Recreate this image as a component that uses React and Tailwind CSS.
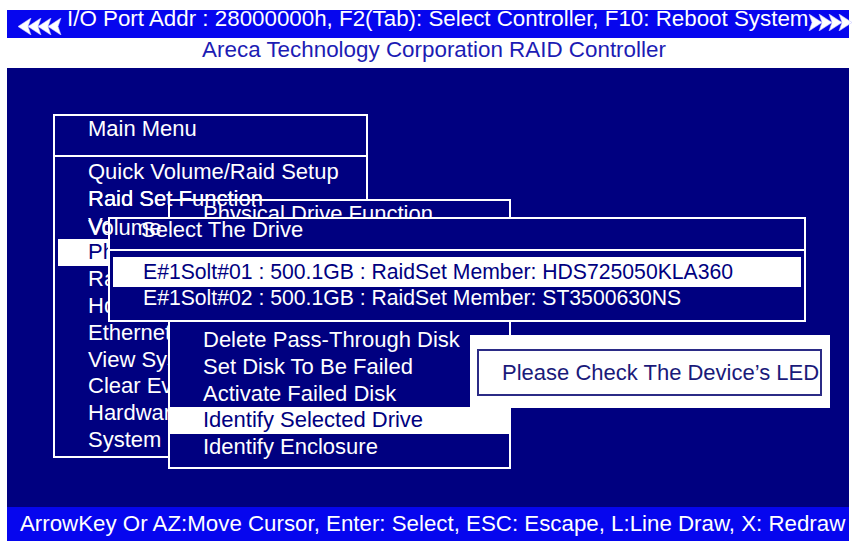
import React from 'react';

// Areca RAID BIOS screen: Physical Drives > Identify Selected Drive

const mainMenu = [
  'Quick Volume/Raid Setup',
  'Raid Set Function',
  'Volume Set Function',
  'Physical Drives',
  'Raid System Function',
  'Hdd Power Management',
  'Ethernet Configuration',
  'View System Events',
  'Clear Event Buffer',
  'Hardware Monitor',
  'System information',
];

// rows above these sit under the "Select The Drive" window
const driveMenu = [
  'Delete Pass-Through Disk',
  'Set Disk To Be Failed',
  'Activate Failed Disk',
  'Identify Selected Drive',
  'Identify Enclosure',
];

const drives = [
  'E#1Solt#01 : 500.1GB : RaidSet Member: HDS725050KLA360',
  'E#1Solt#02 : 500.1GB : RaidSet Member: ST3500630NS',
];

const Arrows = ({ flip }) => (
  <svg width="44" height="17" viewBox="0 0 44 17" className={flip ? 'shrink-0 -scale-x-100' : 'shrink-0'}>
    {[0, 1, 2, 3].map(i => (
      <polygon
        key={i}
        points={`${i * 10},8.5 ${i * 10 + 13},0 ${i * 10 + 10},8.5 ${i * 10 + 13},17`}
        fill="#ffffff"
        stroke="#c8c8ff"
        strokeWidth="0.6"
      />
    ))}
  </svg>
);

const MainMenu = () => (
  <div className="absolute left-[46px] top-[46px] w-[315px] h-[344px] border-2 border-white bg-[#000080]">
    <div className="h-[41px] border-b-2 border-white pl-[33px] leading-[26.8px]">Main Menu</div>
    <div className="pt-[2px]">
      {mainMenu.map((t, i) => (
        <div
          key={t}
          className={`mx-[3px] pl-[30px] leading-[26.8px] whitespace-nowrap overflow-hidden ${i === 3 ? 'bg-white text-[#000080]' : ''}`}
        >
          {t}
        </div>
      ))}
    </div>
  </div>
);

const DriveFunction = () => (
  <div className="absolute left-[161px] top-[131px] w-[343px] h-[270px] border-2 border-white bg-[#000080]">
    <div className="h-[36px] border-b-2 border-white pl-[33px] leading-[26.8px]">Physical Drive Function</div>
    <div className="pt-[90px]">
      {driveMenu.map((t, i) => (
        <div
          key={t}
          className={`pl-[33px] leading-[26.8px] whitespace-nowrap ${i === 3 ? 'bg-white text-[#000080]' : ''}`}
        >
          {t}
        </div>
      ))}
    </div>
  </div>
);

const SelectDrive = () => (
  <div className="absolute left-[101px] top-[149px] w-[698px] h-[105px] border-2 border-white bg-[#000080]">
    <div className="h-[32px] border-b-2 border-white pl-[31px] leading-[22px]">Select The Drive</div>
    <div className="pt-[6px] text-[21.2px]">
      <div className="mx-[3px] pl-[30px] leading-[30px] bg-white text-[#000080] whitespace-nowrap">{drives[0]}</div>
      <div className="mx-[3px] pl-[30px] leading-[22px] whitespace-nowrap">{drives[1]}</div>
    </div>
  </div>
);

const LedMessage = () => (
  <div className="absolute left-[463px] top-[267px] w-[360px] h-[73px] bg-white pl-[7px] pt-[14px]">
    <div className="w-[345px] h-[47px] border-2 border-[#2b2b86] flex items-center pl-[23px] text-[#1a1a7a] whitespace-nowrap">
      Please Check The Device’s LED
    </div>
  </div>
);

export default function App() {
  return (
    <div className="w-[856px] h-[543px] bg-white pt-[10px] px-[7px] font-['Liberation_Sans',Arial,sans-serif] text-[22px] text-white overflow-hidden">
      {/* top key bar */}
      <div className="h-[28px] bg-[#0606ee] flex items-start whitespace-nowrap leading-[17px] text-[22.35px]">
        <div className="ml-[11px] mt-[8px]"><Arrows /></div>
        <span className="ml-[5px]">I/O Port Addr : 28000000h, F2(Tab): Select Controller, F10: Reboot System</span>
        <div className="mt-[4px]"><Arrows flip /></div>
      </div>

      <div className="h-[30px] pt-[1px] pl-[12px] text-center leading-[22px] text-[22.4px] text-[#1c1cb4] whitespace-nowrap">
        Areca Technology Corporation RAID Controller
      </div>

      {/* screen canvas: overlapping BIOS windows */}
      <div className="relative h-[439px] bg-[#000080]">
        <MainMenu />
        <DriveFunction />
        <div className="absolute left-[81px] top-[117.9px] leading-[26.8px] whitespace-nowrap">Raid Set Function</div>
        <SelectDrive />
        <div className="absolute left-[81px] top-[147px] w-[80px] overflow-hidden leading-[26.8px] whitespace-nowrap">Volume Set Function</div>
        <LedMessage />
      </div>

      <div className="h-[34px] bg-[#0606ee] pl-[13px] leading-[34px] text-[22.3px] whitespace-nowrap">
        ArrowKey Or AZ:Move Cursor, Enter: Select, ESC: Escape, L:Line Draw, X: Redraw
      </div>
    </div>
  );
}
